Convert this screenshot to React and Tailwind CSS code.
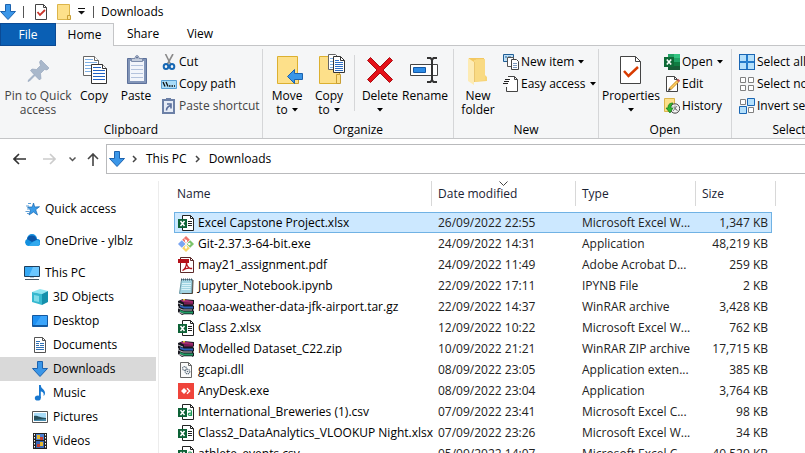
import React from "react";

function Svg({ w = 16, h = 16, children }) {
  return (
    <svg width={w} height={h} viewBox={`0 0 ${w} ${h}`} fill="none" aria-hidden="true" className="shrink-0">
      {children}
    </svg>
  );
}

/* ---------- shared glyphs ---------- */

const DownArrow = () => (
  <Svg>
    <path d="M5.500 .5h5v7h5L8 15.500 .5 7.500h5z" fill="#3a96e8" stroke="#1c62ae" />
  </Svg>
);

const Caret = () => (
  <svg width="6" height="4" viewBox="0 0 6 4" aria-hidden="true" className="inline-block shrink-0 align-middle">
    <path d="M0 0h6L3 3.500z" fill="#000" />
  </svg>
);

const Crumb = () => (
  <Svg w={5} h={8}>
    <path d="M1 1l3 3-3 3" stroke="#444" strokeWidth="1.500" />
  </Svg>
);

/* ---------- title bar ---------- */

const CheckDoc = () => (
  <Svg w={12} h={16}>
    <path d="M.5 .5h8l3 3v12H.5z" fill="#fff" stroke="#444" />
    <path d="M8.500 .5v3h3" stroke="#444" />
    <path d="M2.500 8l2.500 3 5-5" stroke="#c9342a" strokeWidth="1.800" />
  </Svg>
);

const SmallFolder = () => (
  <Svg w={14} h={16}>
    <path d="M.5 .5h12v15H.5z" fill="#fde08a" stroke="#dcb54a" />
    <path d="M10.500 11.500h3v4h-3z" fill="#fde08a" stroke="#c99f35" />
  </Svg>
);

/* ---------- large ribbon icons ---------- */

const PinIcon = () => (
  <Svg w={32} h={32}>
    <path
      d="M19 7l8 8-2 2-2.500-.5-4 4 .5 5-1.500 1.500-4.500-4.500-5.500 5.500-1.500.5.500-1.500 5.500-5.500L8.500 17.500l1.500-1.500 4.500 .5 4-4L17.500 9z"
      fill="#a9b8cb"
      stroke="#8fa0b8"
      strokeWidth=".6"
    />
  </Svg>
);

const PageLines = ({ x, y, c, dark }) => (
  <g transform={`translate(${x} ${y})`}>
    <path d="M.5 .5h11l4 4v15H.5z" fill="#fff" stroke={dark} />
    <path d="M11.500 .5v4h4" fill="#fff" stroke={dark} />
    <path d="M2 3.500h8M2 6.500h12M2 9.500h12M2 12.500h12M2 15.500h12" stroke={c} />
  </g>
);

const CopyIcon = () => (
  <Svg w={32} h={32}>
    <PageLines x={5} y={3} c="#7fb0e4" dark="#666" />
    <PageLines x={13} y={11} c="#1f62c4" dark="#333" />
  </Svg>
);

const PasteIcon = () => (
  <Svg w={32} h={32}>
    <path d="M7.500 5.500h19v25h-19z" fill="#8295b8" stroke="#5c709a" />
    <path d="M10 8h14v20H10z" fill="#f2f5fb" />
    <path d="M11 12.500h12M11 16.500h12M11 20.500h12M11 24.500h12" stroke="#b4c3dd" />
    <path d="M11.500 8.500v-3h3.500c0-4 4-4 4 0h3.500v3z" fill="#c5cedd" stroke="#7d8cab" />
    <circle cx="17" cy="4.500" r="1" fill="#5a6c90" />
  </Svg>
);

const BigFolder = () => (
  <>
    <path d="M6.500 3.500h20v27h-20z" fill="#fde08a" stroke="#dcb030" />
    <path d="M23.500 21.500h4v9h-4z" fill="#fde08a" stroke="#c99f35" />
  </>
);

const MoveIcon = () => (
  <Svg w={32} h={32}>
    <BigFolder />
    <path d="M16.500 23.500l7-7v4h8v6h-8v4z" fill="#3a96e8" stroke="#1c62ae" />
  </Svg>
);

const CopyToIcon = () => (
  <Svg w={32} h={32}>
    <BigFolder />
    <path d="M15.500 1.500h7l3 3v12h-10z" fill="#fff" stroke="#666" />
    <path d="M17 5.500h3M17 8.500h3M17 11.500h3M17 14.500h3" stroke="#7fb0e4" />
    <path d="M20.500 3.500h7l4 4v12h-11z" fill="#fff" stroke="#333" />
    <path d="M27.500 3.500v4h4" stroke="#333" />
    <path d="M22 7.500h4M22 9.500h8M22 11.500h8M22 13.500h8M22 15.500h8M22 17.500h8" stroke="#2f6fc4" />
  </Svg>
);

const DeleteIcon = () => (
  <Svg w={32} h={32}>
    <path d="M3.500 7.500l3-3 9.500 9.500 9.500-9.500 3 3L19 17l9.500 9.500-3 3L16 20l-9.500 9.500-3-3L13 17z" fill="#e50f18" stroke="#a80d12" />
  </Svg>
);

const RenameIcon = () => (
  <Svg w={32} h={32}>
    <path d="M1.500 11.500h27v11h-27z" fill="#fff" stroke="#444" />
    <path d="M4.500 14.500h12v5h-12z" fill="#2c8be6" stroke="#1458a4" />
    <path d="M23 6v22" stroke="#333" strokeWidth="2" />
    <path d="M18 5h3.500L23 7l1.500-2H28M18 29h3.500l1.500-2 1.500 2H28" stroke="#333" strokeWidth="2" />
  </Svg>
);

const NewFolderIcon = () => (
  <Svg w={32} h={32}>
    <path d="M7 5h15v20H7z" fill="#f3c862" />
    <path d="M14 6h8v15l3 3v4l-12 1z" fill="#f7d477" />
    <path d="M12 7l11-1v21l-11 2z" fill="#f9da83" />
    <path d="M6 5l6 4v23l-6-4z" fill="#fdebb4" />
    <path d="M12.500 9v20" stroke="#eac670" />
  </Svg>
);

const PropertiesIcon = () => (
  <Svg w={32} h={32}>
    <path d="M5.500 3.500h15l5 5v22h-20z" fill="#fff" stroke="#444" />
    <path d="M20.500 3.500v5h5" stroke="#444" />
    <path d="M9 18l4.500 5L23 14" stroke="#d83b01" strokeWidth="2.500" />
  </Svg>
);

/* ---------- small ribbon icons ---------- */

const CutIcon = () => (
  <Svg>
    <path d="M4.500 0l5 10M12 0L6.500 10" stroke="#8a8a8a" strokeWidth="1.600" />
    <ellipse cx="5" cy="12.500" rx="2.300" ry="2.500" stroke="#1768b4" strokeWidth="2" />
    <ellipse cx="11" cy="12.500" rx="2.300" ry="2.500" stroke="#1768b4" strokeWidth="2" />
  </Svg>
);

const CopyPathIcon = () => (
  <Svg>
    <path d="M.5 4.500h15v8H.5z" fill="#a9dcf8" stroke="#5ba0d4" />
    <path d="M2 6l2 4.500M5 6l2 4.500" stroke="#111" strokeWidth="1.300" />
    <path d="M8 10h1.500M10.500 10H12M13 10h1" stroke="#111" strokeWidth="1.500" />
  </Svg>
);

const PasteShortcutIcon = () => (
  <Svg>
    <path d="M2 2h11v13H2z" fill="#e6ecf6" stroke="#6c80a6" strokeWidth="2" />
    <path d="M5 0h5v3H5z" fill="#6c80a6" />
    <path d="M5.500 12.500c0-3 1-4 4-5M6 6h4v4.500" stroke="#5a6f9c" strokeWidth="1.600" />
  </Svg>
);

const NewItemIcon = () => (
  <Svg>
    <path d="M.5 .5h10v7H.5z" fill="#bfe0f7" stroke="#1f5d95" />
    <path d="M2 3h2M5 3h3" stroke="#1f5d95" />
    <path d="M4.500 3.500h6v9h-6z" fill="#fff" stroke="#555" />
    <path d="M8.500 5.500h5l2 2v8h-7z" fill="#fff" stroke="#444" />
    <path d="M10 9.500h4M10 11.500h4M10 13.500h4" stroke="#7b97bb" />
  </Svg>
);

const EasyAccessIcon = () => (
  <Svg>
    <path d="M4.500 .5h7l3 3v12h-10z" fill="#fff" />
    <path d="M5 .5h6.500l3 3v12h-11V11M11.500 .5v3h3" stroke="#444" />
    <path d="M2 3.500h5M1 5.500h5M0 7.500h5" stroke="#222" />
  </Svg>
);

const ExcelAppIcon = () => (
  <Svg>
    <path d="M4 0h12v16H4z" fill="#21a366" />
    <path d="M10 0h6v4h-6z" fill="#33c481" />
    <path d="M4 8h6v8H4zM10 12h6v4h-6z" fill="#185c37" />
    <path d="M10 8h6v4h-6z" fill="#107c41" />
    <path d="M0 3h10v10H0z" fill="#0e6a37" />
    <path d="M2.800 5.500l4.400 5M7.200 5.500l-4.400 5" stroke="#fff" strokeWidth="1.600" />
  </Svg>
);

const EditIcon = () => (
  <Svg>
    <path d="M2.500 .5h8l3 3v12h-11z" fill="#fff" stroke="#444" />
    <path d="M10.500 .5v3h3" stroke="#444" />
    <path d="M6 13L14 5" stroke="#d0902a" strokeWidth="3" />
    <path d="M6.500 12.500L13.500 5.500" stroke="#fbd062" strokeWidth="1.400" />
    <path d="M13.800 5.200l1.400-1.400" stroke="#c85858" strokeWidth="3" />
    <path d="M4 15l1-3 2 2z" fill="#333" />
  </Svg>
);

const HistoryIcon = () => (
  <Svg>
    <path d="M.5 .5h10v13H.5z" fill="#fde08a" stroke="#dcb54a" />
    <circle cx="11" cy="10.500" r="4.700" fill="#f2f2f2" stroke="#444" />
    <path d="M11 7.500v3l2.500 2M9 8.500l4 4M13 8l-4 5" stroke="#666" strokeWidth=".8" />
    <path d="M9 5C5 5 4 7 4 10H2l4 5 3-5H7c0-2 0-3 2-5z" fill="#2fb52f" stroke="#14781a" strokeWidth=".7" />
  </Svg>
);

const SelectAllIcon = () => (
  <Svg>
    <path d="M0 0h16v16H0z" fill="#1a66b4" />
    <path d="M1 1h6v6H1zM9 1h6v6H9zM1 9h6v6H1zM9 9h6v6H9z" fill="#b5e0fb" />
    <path d="M8 1v14M1 8h14" stroke="#2f8fe0" />
  </Svg>
);

const SelectNoneIcon = () => (
  <Svg>
    <path d="M1.500 1.500h5v5h-5zM9.500 1.500h5v5h-5zM1.500 9.500h5v5h-5zM9.500 9.500h5v5h-5z" fill="#fff" stroke="#808080" />
  </Svg>
);

const InvertIcon = () => (
  <Svg>
    <path d="M1.500 1.500h5v5h-5zM9.500 9.500h5v5h-5z" fill="#fff" stroke="#808080" />
    <path d="M8.500 .5h7v7h-7zM.5 8.500h7v7h-7z" fill="#b5e0fb" stroke="#1a66b4" />
  </Svg>
);

/* ---------- sidebar icons ---------- */

const QuickIcon = () => (
  <Svg>
    <path d="M9.500 2l1.200 4 4.800-.3-3.800 3L13.500 14 9.500 11l-4.500 3 1.500-5-3-3h4.700z" fill="#3a9be8" stroke="#1767b0" strokeWidth=".7" />
    <path d="M4 2.500h3M2 5h3M3 8h3M1.500 10.500h4M3 12.500h2" stroke="#5f9fd6" />
  </Svg>
);

const CloudIcon = () => (
  <Svg>
    <path d="M4 13a3.800 3.800 0 0 1-1-7A5 5 0 0 1 13 6a3.500 3.500 0 0 1 0 7z" fill="#1490df" />
    <path d="M3 6A5 5 0 0 1 12.500 6l1 .5L8 9z" fill="#0c56a8" />
    <path d="M4 13l5-4 4-2c4 1 3.500 6 0 6z" fill="#32a9ee" />
  </Svg>
);

const PcIcon = () => (
  <Svg>
    <path d="M.5 1.500h15v10H.5z" fill="#36a9f5" stroke="#1f3f5c" />
    <path d="M9 2h6v9H5z" fill="#6cc7ff" />
    <path d="M1 14.500h14" stroke="#4b5a68" />
    <path d="M6 12h4v1H6z" fill="#b8c8d6" />
  </Svg>
);

const CubeIcon = () => (
  <Svg>
    <path d="M0 3l8-3 8 2-6 3z" fill="#8fe6f2" />
    <path d="M0 3l10 2v11L0 13z" fill="#36b8cf" />
    <path d="M10 5l6-3v11l-6 3z" fill="#1590ac" />
    <path d="M2 6l5 1v6l-5-1z" fill="#7fdbe8" />
  </Svg>
);

const DesktopIcon = () => (
  <Svg>
    <path d="M.5 2.500h15v11H.5z" fill="#1e90f2" stroke="#1458a0" />
    <path d="M9 3h6v9H3z" fill="#3ba5fb" />
    <path d="M1 12.500h14" stroke="#135a9f" />
  </Svg>
);

const DocumentsIcon = () => (
  <Svg>
    <path d="M2.500 .5h8l3 3v12h-11z" fill="#fff" stroke="#555" />
    <path d="M10.500 .5v3h3" stroke="#555" />
    <path d="M4 4.500h4M4 6.500h3M8 6.500h4M4 8.500h3M8 8.500h4M4 10.500h8M4 12.500h8" stroke="#2f70b4" />
  </Svg>
);

const MusicIcon = () => (
  <Svg>
    <path d="M7 0h1.800c0 4 4.200 4 4.200 8 0 1.500-.8 2.500-1.500 3C12.500 7.500 10 6.500 8.800 6.500V13H7z" fill="#1878d0" />
    <ellipse cx="5.800" cy="13" rx="3" ry="2.600" fill="#1878d0" />
  </Svg>
);

const PicturesIcon = () => (
  <Svg>
    <path d="M.5 2.500h15v11H.5z" fill="#fff" stroke="#555" />
    <path d="M2 4h12v8H2z" fill="#a9dcf8" />
    <path d="M2 7c3-1 6 2 12 2v3H2z" fill="#27505c" />
    <path d="M2 11l12-1v2H2z" fill="#4b8fb0" />
  </Svg>
);

const VideosIcon = () => (
  <Svg>
    <path d="M1 0h14v16H1z" fill="#222" />
    <path d="M4 1h8v6H4z" fill="#4b7fd0" />
    <path d="M4 8h8v7H4z" fill="#3967b8" />
    <path d="M5 2h3v4H5zM8 9h3v4H8z" fill="#e5b92e" />
    <path d="M8 4h3v3H8zM5 11h3v3H5z" fill="#c43e2e" />
    <path d="M2.500 1v15M13.500 1v15" stroke="#fff" strokeDasharray="1.500 1.500" />
  </Svg>
);

/* ---------- file icons ---------- */

const SheetBase = () => (
  <>
    <path d="M4.500 .5h8l3 3v12h-11z" fill="#fff" stroke="#222" />
    <path d="M12.500 .5v3h3" stroke="#222" />
    <path d="M0 4h9v9H0z" fill="#0d6236" />
    <path d="M2.500 6l4 5M6.500 6l-4 5" stroke="#fff" strokeWidth="1.500" />
  </>
);

const XlsxIcon = () => (
  <Svg>
    <SheetBase />
    <path d="M10 6.500h4M10 8.500h4M10 10.500h4" stroke="#222" />
  </Svg>
);

const CsvIcon = () => (
  <Svg>
    <SheetBase />
    <path d="M10.300 6.500c1-.8 3.200-.8 3.200 1V12M13.500 8.800c-2 0-3.200.3-3.200 1.500 0 1.500 2.500 1.500 3.200 0" stroke="#1f9a58" strokeWidth="1.200" />
  </Svg>
);

const GitIcon = () => (
  <Svg>
    <path d="M8 0l3.800 3.800L8 7.500 4.200 3.800z" fill="#f0736a" />
    <path d="M3.800 4.200L7.500 8l-3.700 3.800L0 8z" fill="#7aa5f2" />
    <path d="M12.200 4.200L16 8l-3.800 3.800L8.500 8z" fill="#7cc46a" />
    <path d="M8 8.500l3.800 3.700L8 16l-3.800-3.800z" fill="#f8d566" />
    <path d="M6 2.500l2 2v7M8 5.500l3 3" stroke="#fff" />
    <circle cx="8" cy="5" r="1.200" fill="#fff" />
    <circle cx="11.300" cy="8" r="1.200" fill="#fff" />
    <circle cx="8" cy="11.500" r="1.200" fill="#fff" />
  </Svg>
);

const PdfIcon = () => (
  <Svg>
    <path d="M2.500 .5h10l3 3v12h-13z" fill="#fff" stroke="#5b2a2a" />
    <path d="M12.500 .5v3h3" stroke="#5b2a2a" />
    <path d="M0 2h11v4H0z" fill="#b5121b" />
    <path d="M4.500 13.500c2-1 4-4 4-8 0 4 3 6.500 5.500 6-3-.8-7 0-9.500 2z" stroke="#b5121b" strokeWidth="1.300" />
  </Svg>
);

const NotepadIcon = () => (
  <Svg>
    <path d="M3.500 1.500h11l-1 14H1.500z" fill="#a2d4e2" stroke="#6b98a5" />
    <path d="M15 2l-.500 13.500H4" stroke="#4b443c" />
    <path d="M4 5.500h9M4 7.500h9M3.500 9.500h9M3.500 11.500h9" stroke="#d9f2f8" />
    <path d="M3 1.500h12" stroke="#456" strokeWidth="2" strokeDasharray="1 1" />
  </Svg>
);

const RarIcon = () => (
  <Svg>
    <path d="M0 2l5-2 11 1v4l-1 1 1 1v3l-1 1 1 1v3l-2 1H4l-4-3V9l1-1-1-1z" fill="#17171f" />
    <path d="M2 1.500l4-1 9 1.500v2l-9-.5z" fill="#a02a70" />
    <path d="M6 3.500l9 .5v1.500H6z" fill="#7b1c55" />
    <path d="M2 6l4 1.500h9v2H6L2 8z" fill="#2b62b8" />
    <path d="M2 11l4 1.500h9v2H6L2 13z" fill="#1f9a63" />
    <path d="M0 4l5 2M0 9l5 2h9M1 13l5 2.500h8" stroke="#e8e8ee" strokeWidth=".8" />
    <path d="M5 0h2v1.500H5z" fill="#e2c93a" />
  </Svg>
);

const DllIcon = () => (
  <Svg>
    <path d="M2.500 .5h8l3 3v12h-11z" fill="#fafafa" stroke="#666" />
    <path d="M10.500 .5v3h3" stroke="#666" />
    <circle cx="6.500" cy="6.500" r="1.900" stroke="#5d6e7e" strokeWidth="1.200" strokeDasharray="1.200 .6" />
    <circle cx="9.500" cy="9.500" r="2.300" stroke="#5d6e7e" strokeWidth="1.200" strokeDasharray="1.200 .6" />
    <circle cx="9.500" cy="9.500" r=".8" fill="#5d6e7e" />
  </Svg>
);

const AnyDeskIcon = () => (
  <Svg>
    <path d="M0 0h16v16H0z" fill="#ef443b" />
    <path d="M6 5l3 3-3 3-3-3z" fill="#fff" />
    <path d="M9 5.300L11.700 8 9 10.700" stroke="#fff" strokeWidth="1.300" />
  </Svg>
);

/* ---------- ribbon pieces ---------- */

function BigButton({ icon: Icon, lines, menu, width = "w-[42px]", dim }) {
  const last = lines.length - 1;
  return (
    <button type="button" className={`flex shrink-0 flex-col items-center pt-0.5 ${width} ${dim ? "text-[#444]" : ""}`}>
      <Icon />
      <span className="mt-1 flex flex-col items-center leading-[14px]">
        {lines.map((line, i) => (
          <span key={line} className="flex items-center gap-1 whitespace-nowrap">
            {line}
            {menu && i === last && last > 0 && <Caret />}
          </span>
        ))}
        {menu && last === 0 && (
          <span className="flex h-[13px] items-center">
            <Caret />
          </span>
        )}
      </span>
    </button>
  );
}

function SmallButton({ icon: Icon, label, menu, dim }) {
  return (
    <button type="button" className={`flex h-[22px] items-center gap-0.5 whitespace-nowrap ${dim ? "text-[#444]" : ""}`}>
      <Icon />
      <span>{label}</span>
      {menu && <span className="ml-0.5 flex"><Caret /></span>}
    </button>
  );
}

function Group({ label, width, children }) {
  return (
    <section aria-label={label} className={`flex shrink-0 flex-col pt-0.5 ${width}`}>
      <div className="flex h-[72px] items-start px-[3px]">{children}</div>
      <div className="text-center leading-4">{label}</div>
    </section>
  );
}

const Divider = () => <div className="w-px shrink-0 self-stretch bg-[#d5d6d8]" />;

const Stack = ({ children }) => <div className="flex flex-col px-1">{children}</div>;

function Ribbon() {
  return (
    <div className="flex h-[93px] overflow-hidden border-b border-[#c4c5c7] bg-[#f5f6f7] pt-[3px]">
      <Group label="Clipboard" width="w-[262px]">
        <BigButton icon={PinIcon} lines={["Pin to Quick", "access"]} width="w-[70px]" dim />
        <BigButton icon={CopyIcon} lines={["Copy"]} />
        <BigButton icon={PasteIcon} lines={["Paste"]} />
        <Stack>
          <SmallButton icon={CutIcon} label="Cut" />
          <SmallButton icon={CopyPathIcon} label="Copy path" />
          <SmallButton icon={PasteShortcutIcon} label="Paste shortcut" dim />
        </Stack>
      </Group>
      <Divider />
      <Group label="Organize" width="w-[190px]">
        <BigButton icon={MoveIcon} lines={["Move", "to"]} menu />
        <BigButton icon={CopyToIcon} lines={["Copy", "to"]} menu />
        <div className="mx-1 mt-1 h-14 w-px shrink-0 bg-[#d5d6d8]" />
        <BigButton icon={DeleteIcon} lines={["Delete"]} menu />
        <BigButton icon={RenameIcon} lines={["Rename"]} width="w-[48px]" />
      </Group>
      <Divider />
      <Group label="New" width="w-[144px]">
        <BigButton icon={NewFolderIcon} lines={["New", "folder"]} />
        <Stack>
          <SmallButton icon={NewItemIcon} label="New item" menu />
          <SmallButton icon={EasyAccessIcon} label="Easy access" menu />
        </Stack>
      </Group>
      <Divider />
      <Group label="Open" width="w-[132px]">
        <BigButton icon={PropertiesIcon} lines={["Properties"]} menu width="w-[58px]" />
        <Stack>
          <SmallButton icon={ExcelAppIcon} label="Open" menu />
          <SmallButton icon={EditIcon} label="Edit" />
          <SmallButton icon={HistoryIcon} label="History" />
        </Stack>
      </Group>
      <Divider />
      <Group label="Select" width="w-[114px]">
        <Stack>
          <SmallButton icon={SelectAllIcon} label="Select all" />
          <SmallButton icon={SelectNoneIcon} label="Select none" />
          <SmallButton icon={InvertIcon} label="Invert selection" />
        </Stack>
      </Group>
    </div>
  );
}

/* ---------- navigation ---------- */

function AddressBar() {
  return (
    <nav aria-label="Address" className="flex h-[42px] items-center pb-0.5 pl-[13px]">
      <button type="button" aria-label="Back">
        <Svg w={13} h={12}>
          <path d="M6 1L1 6l5 5M1 6h12" stroke="#333" strokeWidth="1.600" />
        </Svg>
      </button>
      <button type="button" aria-label="Forward" className="ml-[17px]">
        <Svg w={13} h={12}>
          <path d="M7 1l5 5-5 5M12 6H0" stroke="#ccc" strokeWidth="1.600" />
        </Svg>
      </button>
      <button type="button" aria-label="Recent locations" className="ml-[13px]">
        <Svg w={7} h={5}>
          <path d="M.5 .5l3 3 3-3" stroke="#555" strokeWidth="1.500" />
        </Svg>
      </button>
      <button type="button" aria-label="Up" className="ml-[11px]">
        <Svg w={12} h={13}>
          <path d="M1 6l5-5 5 5M6 1v12" stroke="#444" strokeWidth="1.600" />
        </Svg>
      </button>
      <div className="ml-[7px] flex h-[30px] flex-1 items-center border-y border-l border-[#b9babc] pl-0.5">
        <DownArrow />
        <span className="ml-[7px] flex w-[14px]"><Crumb /></span>
        <button type="button">This PC</button>
        <span className="ml-2 flex w-[14px]"><Crumb /></span>
        <button type="button">Downloads</button>
      </div>
    </nav>
  );
}

const places = [
  { label: "Quick access", icon: QuickIcon, root: true },
  { label: "OneDrive - ylblz", icon: CloudIcon, root: true },
  { label: "This PC", icon: PcIcon, root: true },
  { label: "3D Objects", icon: CubeIcon },
  { label: "Desktop", icon: DesktopIcon },
  { label: "Documents", icon: DocumentsIcon },
  { label: "Downloads", icon: DownArrow, active: true },
  { label: "Music", icon: MusicIcon },
  { label: "Pictures", icon: PicturesIcon },
  { label: "Videos", icon: VideosIcon },
];

function Sidebar() {
  return (
    <nav aria-label="Places" className="w-[159px] shrink-0 overflow-hidden border-r border-[#ececec] pr-0.5 pt-2">
      {places.map(({ label, icon: Icon, root, active }) => (
        <a
          key={label}
          href="#"
          aria-current={active ? "page" : undefined}
          className={`flex h-6 items-center gap-[5px] whitespace-nowrap ${root ? "mt-2 pl-6" : "pl-8"} ${active ? "bg-[#d9d9d9]" : ""}`}
        >
          <Icon />
          {label}
        </a>
      ))}
    </nav>
  );
}

/* ---------- file list ---------- */

const files = [
  [XlsxIcon, "Excel Capstone Project.xlsx", "26/09/2022 22:55", "Microsoft Excel W...", "1,347 KB"],
  [GitIcon, "Git-2.37.3-64-bit.exe", "24/09/2022 14:31", "Application", "48,219 KB"],
  [PdfIcon, "may21_assignment.pdf", "24/09/2022 11:49", "Adobe Acrobat D...", "259 KB"],
  [NotepadIcon, "Jupyter_Notebook.ipynb", "22/09/2022 17:11", "IPYNB File", "2 KB"],
  [RarIcon, "noaa-weather-data-jfk-airport.tar.gz", "22/09/2022 14:37", "WinRAR archive", "3,428 KB"],
  [XlsxIcon, "Class 2.xlsx", "12/09/2022 10:22", "Microsoft Excel W...", "762 KB"],
  [RarIcon, "Modelled Dataset_C22.zip", "10/09/2022 21:21", "WinRAR ZIP archive", "17,715 KB"],
  [DllIcon, "gcapi.dll", "08/09/2022 23:05", "Application exten...", "385 KB"],
  [AnyDeskIcon, "AnyDesk.exe", "08/09/2022 23:04", "Application", "3,764 KB"],
  [CsvIcon, "International_Breweries (1).csv", "07/09/2022 23:41", "Microsoft Excel C...", "98 KB"],
  [XlsxIcon, "Class2_DataAnalytics_VLOOKUP Night.xlsx", "07/09/2022 23:26", "Microsoft Excel W...", "34 KB"],
  [CsvIcon, "athlete_events.csv", "05/09/2022 14:07", "Microsoft Excel C...", "40,529 KB"],
];

function FileList() {
  return (
    <main className="min-w-0 flex-1 overflow-hidden pl-[15px]">
      <table className="w-[602px] table-fixed border-separate border-spacing-0 whitespace-nowrap">
        <colgroup>
          <col className="w-[258px]" />
          <col className="w-[144px]" />
          <col className="w-[120px]" />
          <col className="w-[76px]" />
          <col className="w-1" />
        </colgroup>
        <thead>
          <tr className="h-[25px] text-left text-[#1a2233]">
            <th className="border-r border-[#d8d8d8] p-0 pl-[3px] font-normal">Name</th>
            <th aria-sort="descending" className="relative border-r border-[#d8d8d8] p-0 pl-1.5 font-normal">
              <span className="absolute inset-x-0 top-0 flex justify-center">
                <Svg w={9} h={5}>
                  <path d="M.5 .5l4 4 4-4" stroke="#444" />
                </Svg>
              </span>
              Date modified
            </th>
            <th className="border-r border-[#d8d8d8] p-0 pl-1.5 font-normal">Type</th>
            <th className="p-0 pl-1.5 font-normal">Size</th>
            <th className="border-r border-[#d8d8d8] p-0" />
          </tr>
        </thead>
        <tbody>
          <tr className="h-1.5" aria-hidden="true">
            <td colSpan={5} className="p-0" />
          </tr>
          {files.map(([Icon, name, date, type, size], i) => {
            const tone = i === 0 ? "border-y border-[#70b2e4] bg-[#cce8ff]" : "border-y border-transparent";
            return (
              <tr key={name} aria-selected={i === 0} className="h-[21px] text-[#222]">
                <td className={`${tone} border-l p-0 pl-[3px] text-black`}>
                  <span className="flex h-[19px] items-center gap-1">
                    <Icon />
                    {name}
                  </span>
                </td>
                <td className={`${tone} p-0 pl-1.5`}>{date}</td>
                <td className={`${tone} p-0 pl-1.5`}>{type}</td>
                <td className={`${tone} border-r p-0 pr-[3px] text-right`}>{size}</td>
                <td className="p-0" />
              </tr>
            );
          })}
        </tbody>
      </table>
    </main>
  );
}

export default function App() {
  return (
    <div className="flex h-screen flex-col overflow-hidden bg-white font-['Open_Sans','Noto_Sans',sans-serif] text-[12px] leading-4 text-black">
      <header className="flex h-[23px] shrink-0 items-center">
        <DownArrow />
        <span className="ml-[7px] h-3 w-px bg-[#555]" />
        <button type="button" aria-label="Properties" className="ml-[11px]"><CheckDoc /></button>
        <button type="button" aria-label="New folder" className="ml-[10px]"><SmallFolder /></button>
        <button type="button" aria-label="Customize toolbar" className="ml-[7px]">
          <Svg w={7} h={7}>
            <path d="M0 .5h7" stroke="#111" />
            <path d="M0 3h7L3.500 6.500z" fill="#111" />
          </Svg>
        </button>
        <span className="ml-2 h-3 w-px bg-[#555]" />
        <h1 className="ml-[7px]">Downloads</h1>
      </header>

      <div role="tablist" className="flex h-[23px] shrink-0">
        <button role="tab" type="button" className="w-14 border border-[#0b4a94] bg-[#0a5fb4] text-white">File</button>
        <button role="tab" type="button" aria-selected="true" className="w-[58px] border-r border-t border-[#c4c5c7] bg-[#f5f6f7]">Home</button>
        <div className="flex flex-1 border-b border-[#c4c5c7]">
          <button role="tab" type="button" className="w-[58px]">Share</button>
          <button role="tab" type="button" className="w-[56px]">View</button>
        </div>
      </div>

      <div className="shrink-0">
        <Ribbon />
        <AddressBar />
      </div>

      <div className="flex min-h-0 flex-1">
        <Sidebar />
        <FileList />
      </div>
    </div>
  );
}
